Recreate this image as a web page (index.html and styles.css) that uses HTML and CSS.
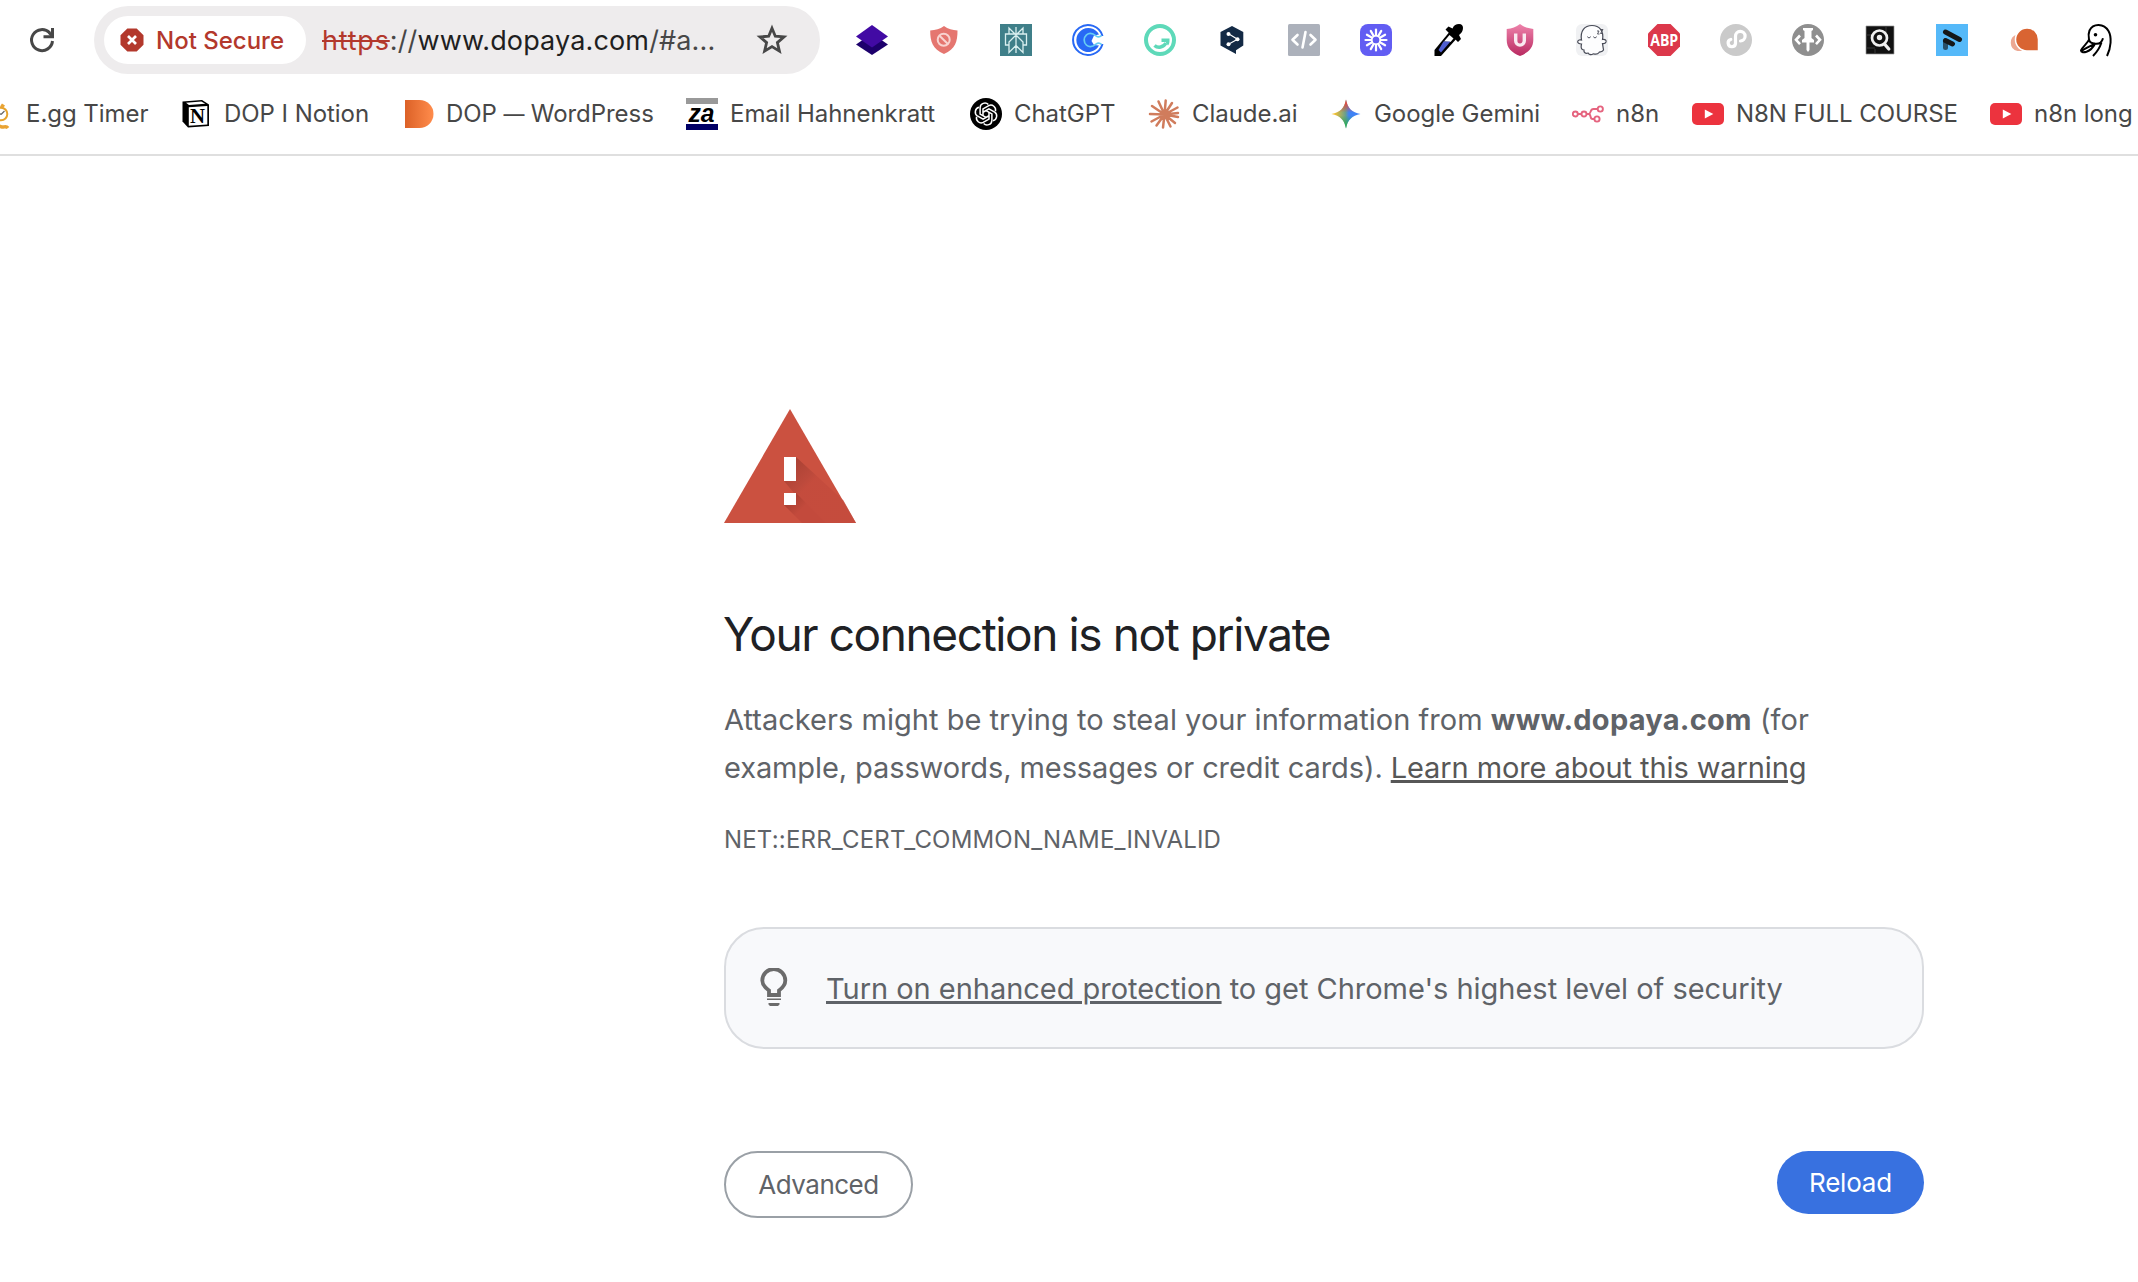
FILE: index.html
```html
<!DOCTYPE html>
<html lang="en">
<head>
<meta charset="utf-8">
<title>Privacy error</title>
<link rel="stylesheet" href="styles.css">
</head>
<body>
<header class="chrome">
  <div class="toolbar">
    <button class="reload-icon" aria-label="Reload this page">
      <svg width="32" height="32" viewBox="0 0 32 32" fill="none" stroke="#474747" stroke-width="3"><path d="M26.5 17A10.5 10.5 0 1 1 23.6 8.8"/><path d="M28 4v10.2H17.500v-3H25V4z" fill="#474747" stroke="none"/><path d="M23 8.500l3.500 3.600"/></svg>
    </button>
    <div class="omnibox">
      <div class="security-chip">
        <svg width="24" height="24" viewBox="0 0 24 24"><path d="M7.3.5h9.4l6.8 6.8v9.4l-6.8 6.8H7.3L.5 16.7V7.3z" fill="#b3382c"/><path d="M8 8l8 8M16 8l-8 8" stroke="#fff" stroke-width="2.7"/></svg>
        <span>Not Secure</span>
      </div>
      <div class="url"><span class="scheme">https</span><span class="dim">://</span>www.dopaya.com<span class="dim">/#a...</span></div>
      <svg class="star" width="32" height="32" viewBox="0 0 32 32" fill="none" stroke="#474747" stroke-width="2.8"><path d="M16 4.2l3.3 8 8.7.7-6.6 5.7 2 8.5L16 22.6l-7.4 4.5 2-8.5L4 12.900l8.700-.7z"/></svg>
    </div>
    <div class="extensions">
      <svg viewBox="0 0 32 32"><path d="M16 9.500l16 11L16 31 0 20.500z" fill="#1d006c"/><path d="M16 1l16 11.500L16 23.500 0 12.500z" fill="#420aa4"/></svg>
      <svg viewBox="0 0 32 32"><path d="M16 2c4 3.300 8.500 4 13.500 4.500 0 11-2 18.500-13.500 23.500C4.500 25 2.200 17.500 2.200 6.500 7.500 6 12 5 16 2z" fill="#e57670"/><g fill="none" stroke="#f8d3d0" stroke-width="2"><circle cx="15.700" cy="15.800" r="6"/><path d="M11.500 11.700l8.400 8.300"/></g></svg>
      <svg viewBox="0 0 32 32"><path d="M0 0h32v32H0z" fill="#3f7f89"/><g fill="none" stroke="#d9efef" stroke-width="1.300"><path d="M16 3v26M9 4v6h14V4l-7 7zM9 10H5.500v11H9M23 10h3.500v11H23M16 11l-7 7v10.500l7-7M16 11l7 7v10.500l-7-7"/></g></svg>
      <svg viewBox="0 0 32 32" fill="none"><path d="M30.500 12A15 15 0 1 0 30.500 20" stroke="#2869f5" stroke-width="2"/><path d="M27 10.500A12 12 0 1 0 27 21.500L22 21l-2.500-4 2.500-5.500z" fill="#2869f5"/><path d="M29.500 11.500c-2 2-4 1.500-5.500.3C20.500 9 17 8.800 14.500 10.800a7 7 0 0 0 0 10.400c2.500 2 6 1.800 9.500-1 1.500-1.200 3.500-1.700 5.500.3" stroke="#66cdf3" stroke-width="1.700"/></svg>
      <svg viewBox="0 0 32 32" fill="none" stroke="#5ed9b9"><circle cx="16" cy="16" r="14" stroke-width="4"/><path d="M10.500 21.500c3.500 3 9 2 11.500-2.500" stroke-width="3.600"/><path d="M17.500 14.500H25.500v2.500c0 2-.5 3-1.500 4.500l-2.500-3.500h-4z" fill="#5ed9b9" stroke="none"/></svg>
      <svg viewBox="0 0 32 32"><path d="M16 2l11.300 6v13.500l-7.300 4.700V30l-5.500-3L4.500 21.500V8z" fill="#132a45"/><path d="M12.500 9.800l9 5.500-9 5" fill="none" stroke="#fff" stroke-width="1.200"/><g fill="#fff"><circle cx="12.500" cy="10" r="2"/><circle cx="21.500" cy="15.300" r="2"/><circle cx="12.500" cy="20.300" r="2"/></g></svg>
      <svg viewBox="0 0 32 32" fill="none" stroke="#fff" stroke-width="2.600" stroke-linejoin="round" stroke-linecap="round"><rect width="32" height="32" rx="1.500" fill="#acb1bb" stroke="none"/><path d="M9.500 11L4.500 15.800l5 4.700M22.500 11l5 4.800-5 4.700M17.500 8l-3 15.500" /></svg>
      <svg viewBox="0 0 32 32"><rect width="32" height="32" rx="8" fill="#625df3"/><g stroke="#fff" stroke-width="2.200" stroke-linecap="round"><path id="ray" d="M16 11.500V5.500"/><use href="#ray" transform="rotate(30 16 16)"/><use href="#ray" transform="rotate(60 16 16)"/><use href="#ray" transform="rotate(90 16 16)"/><use href="#ray" transform="rotate(120 16 16)"/><use href="#ray" transform="rotate(150 16 16)"/><use href="#ray" transform="rotate(180 16 16)"/><use href="#ray" transform="rotate(210 16 16)"/><use href="#ray" transform="rotate(240 16 16)"/><use href="#ray" transform="rotate(270 16 16)"/><use href="#ray" transform="rotate(300 16 16)"/><use href="#ray" transform="rotate(330 16 16)"/></g><circle cx="16" cy="16" r="4.300" fill="none" stroke="#fff" stroke-width="1.600"/></svg>
      <svg viewBox="0 0 32 32"><path d="M2.500 26L19 6l7 7L9 32H2.500z" fill="#000"/><path d="M12 17.500l5.500-6.500 4 3.500-3 3.500z" fill="#fff"/><path d="M11.500 17.500h7L9 28.500 6.500 26z" fill="#4f5ed0"/><path d="M13.500 5.500l3-3 4 2C22 1 24 0 27 0c3 0 4 2 4 4 0 3-1.500 5-4 7l2 4-3 3z" fill="#000"/></svg>
      <svg viewBox="0 0 32 32"><defs><linearGradient id="pink" x2="0" y2="1"><stop stop-color="#ee83ab"/><stop offset="1" stop-color="#b92a61"/></linearGradient></defs><path d="M16 0c4 3.300 8.500 4.500 13.300 5v11c0 8-5 12.500-13.300 16C7.700 28.500 2.700 24 2.700 16V5C8 4.500 12 3.300 16 0z" fill="url(#pink)"/><path d="M11.700 9.500v7.300a4.300 4.300 0 0 0 8.600 0V9.500" fill="none" stroke="#f9eaf0" stroke-width="3.400"/></svg>
      <svg viewBox="0 0 32 32"><rect width="32" height="32" rx="6" fill="#f0f1f3"/><path d="M5.500 16C4 7 8.500 1.500 16 1.500S28 7 26.500 15.500c3-.5 4 1 3.500 2.500-.5 1.300-2 1.800-3.500 1.600l1 6.400c-1.500 3-4 1-4.500 2.500-2 3-4.500 1-6 1.500-2.500 1.500-4.500 0-5-1-2.500 1-4.500-.5-4-3C4.500 26 5 22 5.500 20 3 20 1.500 19 1.700 17.500 2 16 4 15.500 5.500 16z" fill="#fdfdfe" stroke="#484b57" stroke-width="1.200"/><path d="M11.500 12.500c0 1.800 3 1.800 3 0M17.500 12.500c0 1.800 3 1.800 3 0M21 7h2l-1.500 3h2M24.500 5.500h2.500l-2.500 4H27" fill="none" stroke="#484b57" stroke-width=".9"/></svg>
      <svg viewBox="0 0 32 32"><path d="M9.500 0h13L32 9.500v13L22.500 32h-13L0 22.500v-13z" fill="#dc384b"/><text class="abp" x="2.200" y="21.800" textLength="28" lengthAdjust="spacingAndGlyphs">ABP</text></svg>
      <svg viewBox="0 0 32 32"><circle cx="16" cy="16" r="16" fill="#cacaca"/><path d="M10.800 15.500a3.700 3.700 0 1 0 4.700 4V12.300a4.800 4.800 0 1 1 5 4.700" fill="none" stroke="#fff" stroke-width="3.200" stroke-linecap="round"/></svg>
      <svg viewBox="0 0 32 32"><circle cx="16" cy="16" r="16" fill="#8f8f8f"/><path d="M11 4h10v2l-1.500 1v7l2.500 2v2.500h-4.500V26L16 28l-1.500-2v-7.500H10V16l2.500-2V7L11 6z" fill="#fff"/><path d="M8 11.500l-4 4.300 4 4.300M24 11.500l4 4.300-4 4.300" fill="none" stroke="#fff" stroke-width="2.600"/></svg>
      <svg viewBox="0 0 32 32"><path d="M2 2h28v28H2z" fill="#111" stroke="#999" stroke-width=".7"/><path d="M2.500 11h7M22 3v6M3 24h8M11 29v-4" stroke="#3a3a3a" stroke-width="1"/><circle cx="15.500" cy="14" r="7.500" fill="none" stroke="#f0f0f0" stroke-width="2.700"/><path d="M20.500 20l4.300 5" stroke="#f0f0f0" stroke-width="3.300" stroke-linecap="round"/><circle cx="15.500" cy="13.500" r="2.700" fill="#eee"/></svg>
      <svg viewBox="0 0 32 32" fill="none" stroke-linecap="round" stroke-width="5"><path d="M0 0h32v32H0z" fill="#55b9f9"/><path d="M9.500 17v6.500" stroke="#28506a"/><path d="M9.500 8l14 7.500M9.500 16.500l7 3.500" stroke="#151719"/></svg>
      <svg viewBox="0 0 32 32"><path d="M9 10.500A8.500 8.500 0 0 0 9.500 27h5z" fill="#eca893"/><path d="M19 4a11.300 11.300 0 0 1 11.500 11.500V27H19A11.500 11.500 0 0 1 19 4z" fill="#d96432" stroke="#fff" stroke-width="1.500"/></svg>
      <svg viewBox="0 0 32 32" fill="none" stroke="#000" stroke-width="2"><path d="M27 32c4-8 5-19 1.500-25C24-1 13-1 9.500 6.500 8 10 8.500 13 9 15.500c-1.500 4-6 6.500-8 11 0 2 3 2 5.500 1.200 4-1.500 7-5 8.500-8 4.500.8 7-2 8-5.500M9 15.500c.5 2.500 3 4 6 4.200M15 19.700c-3 1.500-9 4-13 7M13 32c4-4 7-9 8.500-13.500"/><circle cx="15.500" cy="10.700" r="1.800" fill="#000" stroke="none"/></svg>
    </div>
  </div>

  <nav class="bookmarks">
    <a class="bookmark timer"><svg viewBox="0 0 32 32" fill="none"><circle cx="21" cy="16" r="6.300" fill="#fff" stroke="#e6a32c" stroke-width="2"/><path d="M21 16.500l3.500-3.500M21 16.500l-3-2" stroke="#666" stroke-width="1.200"/><path d="M21 7l3 2M14 29.500c3-3 6-1 8-.5s4-1.500 6 1" stroke="#e9a334" stroke-width="3.500"/></svg><span>E.gg Timer</span></a>
    <a class="bookmark"><svg viewBox="0 0 32 32"><path d="M2.500 3.500L22 2l7 4.500V28L8 29.500l-5.500-6z" fill="#000"/><path d="M6 4.700l15.300-1.200 4 2.300L9 7zM8.800 9.300l18.500-1.200v18.500L8.800 27.800z" fill="#fff"/><text class="notion-n" x="10" y="24.500" textLength="15" lengthAdjust="spacingAndGlyphs">N</text></svg><span>DOP I Notion</span></a>
    <a class="bookmark"><svg viewBox="0 0 32 32"><defs><linearGradient id="dop"><stop stop-color="#dc6127"/><stop offset="1" stop-color="#ff8c4c"/></linearGradient></defs><path d="M3 2h14.500a14 14 0 0 1 0 28H3z" fill="url(#dop)"/></svg><span>DOP <span class="dash">—</span> WordPress</span></a>
    <a class="bookmark"><svg viewBox="0 0 32 32"><path d="M0 0h32v6H0z" fill="#999"/><path d="M0 26h32v6H0z" fill="#000066"/><text class="za" x="2.500" y="24.300" textLength="26" lengthAdjust="spacingAndGlyphs">za</text></svg><span>Email Hahnenkratt</span></a>
    <a class="bookmark"><svg viewBox="0 0 32 32"><circle cx="16" cy="16" r="16" fill="#000"/><g fill="none" stroke="#fff" stroke-width="1.500"><path id="knot" d="M13 17.700v-6.800l5.800-3.300c3.500-1.800 7.700 1.700 6.600 5.700"/><use href="#knot" transform="rotate(60 16 16)"/><use href="#knot" transform="rotate(120 16 16)"/><use href="#knot" transform="rotate(180 16 16)"/><use href="#knot" transform="rotate(240 16 16)"/><use href="#knot" transform="rotate(300 16 16)"/></g></svg><span>ChatGPT</span></a>
    <a class="bookmark"><svg viewBox="0 0 32 32" stroke="#d07c5c" stroke-width="2.500" stroke-linecap="round"><path d="M16.500 16.500L17.700 2.500M16.500 16.500L24 5M16.500 16.500L29.500 9.500M16.500 16.500L30 15M16.500 16.500L30 19M16.500 16.500L27 25M16.500 16.500l6 12M16.500 16.500L15 29.500M16.500 16.500L8.500 27.500M16.500 16.500L3.500 23.500M16.500 16.500L2 16M16.500 16.500L4 8M16.500 16.500l-6-13"/></svg><span>Claude.ai</span></a>
    <a class="bookmark"><svg viewBox="0 0 32 32"><defs><linearGradient id="gemX"><stop offset=".1" stop-color="#f6c02d"/><stop offset=".48" stop-color="#6a9f8c"/><stop offset=".6" stop-color="#3f82f5"/></linearGradient><linearGradient id="gemTop" x2="0" y2="1"><stop offset=".1" stop-color="#ec4337"/><stop offset=".45" stop-color="#ec4337" stop-opacity="0"/></linearGradient><linearGradient id="gemBot" x2="0" y2="1"><stop offset=".55" stop-color="#27ab55" stop-opacity="0"/><stop offset=".9" stop-color="#2bac55"/></linearGradient><path id="gem" d="M16 1.500C17.500 10 22 14.500 30.500 16 22 17.500 17.500 22 16 30.500 14.500 22 10 17.500 1.500 16 10 14.500 14.500 10 16 1.500z"/></defs><use href="#gem" fill="url(#gemX)"/><use href="#gem" fill="url(#gemTop)"/><use href="#gem" fill="url(#gemBot)"/></svg><span>Google Gemini</span></a>
    <a class="bookmark"><svg viewBox="0 0 32 32" fill="none" stroke="#e5647f" stroke-width="1.900"><circle cx="3.300" cy="16" r="2.500"/><circle cx="12" cy="16" r="2.500"/><circle cx="28.300" cy="11" r="2.600"/><circle cx="25" cy="21" r="2.600"/><path d="M6 16h3.500M14.500 16h2c3 0 1-5 5-5h4M16.500 16c3 0 1 5 4 5h2"/></svg><span>n8n</span></a>
    <a class="bookmark"><svg viewBox="0 0 32 32"><rect y="5" width="32" height="22" rx="5" fill="#ec333e"/><path d="M12.800 11.500l8.500 4.500-8.500 4.500z" fill="#fff"/></svg><span>N8N FULL COURSE</span></a>
    <a class="bookmark"><svg viewBox="0 0 32 32"><rect y="5" width="32" height="22" rx="5" fill="#ec333e"/><path d="M12.800 11.500l8.500 4.500-8.500 4.500z" fill="#fff"/></svg><span>n8n long</span></a>
  </nav>
</header>

<main class="interstitial">
  <svg class="warning" width="132" height="114" viewBox="0 0 132 114">
    <defs><linearGradient id="shade" gradientUnits="userSpaceOnUse" x1="60" y1="48" x2="104" y2="92"><stop stop-color="#9f3c2f"/><stop offset=".5" stop-color="#b7473a" stop-opacity=".75"/><stop offset=".6" stop-color="#c24a3c" stop-opacity=".75"/><stop offset="1" stop-color="#c34a3c" stop-opacity=".75"/></linearGradient>
    <linearGradient id="shade2" gradientUnits="userSpaceOnUse" x1="62" y1="86" x2="82" y2="106"><stop stop-color="#a13c2f"/><stop offset=".75" stop-color="#c34a3c"/></linearGradient></defs>
    <path d="M66 0l66 114H0z" fill="#cb5140"/>
    <path d="M72 48l47.500 43.500L132 114H95L60 72z" fill="url(#shade)"/>
    <path d="M72 84l30 30H78L60 96z" fill="url(#shade2)"/>
    <path d="M60 48h12v24H60zM60 84h12v12H60z" fill="#fff"/>
  </svg>
  <h1>Your connection is not private</h1>
  <p class="explanation"><span class="lead">Attackers might be trying to steal your information from <strong>www.dopaya.com</strong> (for</span><br>example, passwords, messages or credit cards). <a class="learn">Learn more about this warning</a></p>
  <div class="error-code">NET::ERR_CERT_COMMON_NAME_INVALID</div>
  <div class="promo">
    <svg width="28" height="40" viewBox="0 0 28 40"><path d="M9 27v-4.500C5 19.500 2.300 17 2.300 12.500a11.500 11.500 0 0 1 23 0c0 4.500-2.300 7-6.300 10V27z" fill="none" stroke="#6b6b6b" stroke-width="3.800"/><path d="M7 30.500h14v1.500H7zM8.500 35h11v1.500L18 38h-8l-1.500-1.500z" fill="#6b6b6b"/></svg>
    <p><a>Turn on enhanced protection</a> to get Chrome's highest level of security</p>
  </div>
  <div class="actions">
    <button class="btn btn-secondary">Advanced</button>
    <button class="btn btn-primary">Reload</button>
  </div>
</main>
</body>
</html>
```
FILE: styles.css
```css
* {
  box-sizing: border-box;
}

body {
  margin: 0;
  background: #fff;
  font-family: Inter, "Liberation Sans", sans-serif;
  overflow: hidden;
}

button {
  font-family: inherit;
  border: 0;
  background: none;
  padding: 0;
}

.chrome {
  height: 156px;
  border-bottom: 2px solid #dfdfdf;
  overflow: hidden;
}

.toolbar {
  display: flex;
  align-items: center;
  height: 68px;
  margin-top: 6px;
  padding-left: 26px;
}

.reload-icon {
  width: 32px;
  height: 32px;
  margin-right: 36px;
}

.reload-icon svg {
  display: block;
}

.omnibox {
  display: flex;
  flex: none;
  align-items: center;
  width: 726px;
  height: 68px;
  padding: 0 32px 0 10px;
  border-radius: 34px;
  background: #eeeced;
}

.security-chip {
  display: flex;
  align-items: center;
  gap: 12px;
  width: 202px;
  height: 48px;
  padding-left: 16px;
  border-radius: 24px;
  background: #fff;
  color: #b3382c;
  font-size: 24px;
  font-weight: 500;
}

.url {
  margin-left: 16px;
  font-size: 27px;
  letter-spacing: 0.15px;
  color: #1f1f1f;
  white-space: nowrap;
}

.scheme {
  color: #b3382c;
  letter-spacing: 0.8px;
  text-decoration: line-through;
  text-decoration-thickness: 2px;
}

.dim {
  color: #474747;
}

.star {
  margin-left: auto;
}

.extensions {
  display: flex;
  gap: 40px;
  margin-left: 36px;
}

.extensions svg {
  flex: none;
  width: 32px;
  height: 32px;
  overflow: visible;
}

.abp {
  font: 700 15.5px "Open Sans", sans-serif;
  fill: #fff;
}

.bookmarks {
  display: grid;
  grid-template-columns: 200px 222px 284px 284px 178px 182px 242px 120px 298px 180px;
  margin: 24px 0 0 -20px;
}

.bookmark {
  display: flex;
  align-items: center;
  gap: 12px;
  height: 32px;
  color: #474747;
  font-size: 24px;
  letter-spacing: -0.05px;
  white-space: nowrap;
}

.bookmark span {
  margin-top: -1px;
}

.timer {
  gap: 14px;
}

.bookmark svg {
  flex: none;
  width: 32px;
  height: 32px;
}

.dash {
  letter-spacing: -0.5px;
  font-size: 21px;
}

.notion-n {
  font: 700 20px "Liberation Serif", serif;
}

.za {
  font: italic 700 25px "Liberation Sans", sans-serif;
}

.interstitial {
  width: 1200px;
  margin: 253px 0 0 724px;
  color: #5f6368;
}

.warning {
  display: block;
}

h1 {
  margin: 80px 0 0 -1px;
  color: #202124;
  font-size: 46px;
  font-weight: 400;
  line-height: 62px;
  letter-spacing: -1.4px;
}

.explanation {
  margin: 31px 0 0;
  font-size: 29px;
  line-height: 48px;
  letter-spacing: -0.1px;
  white-space: nowrap;
}

.lead {
  letter-spacing: 0.025px;
}

.lead strong {
  letter-spacing: 0.25px;
}

.learn {
  color: #575757;
}

.explanation a,
.promo a {
  text-decoration: underline;
  text-decoration-thickness: 3px;
  text-underline-offset: 2px;
}

.error-code {
  margin-top: 28px;
  font-size: 24px;
  line-height: 40px;
  letter-spacing: 0.18px;
}

.promo {
  display: flex;
  align-items: center;
  height: 122px;
  margin-top: 67px;
  padding-left: 34px;
  border: 2px solid #dadce0;
  border-radius: 40px;
  background: #f8f9fb;
}

.promo p {
  margin: 0 0 0 38px;
  font-size: 29px;
  letter-spacing: -0.03px;
  white-space: nowrap;
}

.actions {
  display: flex;
  justify-content: space-between;
  align-items: flex-start;
  margin-top: 102px;
}

.btn {
  border-radius: 34px;
  font-size: 26px;
}

.btn-secondary {
  width: 189px;
  height: 67px;
  border: 2px solid #9aa0a6;
  color: #5f6368;
  letter-spacing: -0.5px;
}

.btn-primary {
  width: 147px;
  height: 63px;
  background: #3871e0;
  color: #fff;
  letter-spacing: -0.2px;
}
```
